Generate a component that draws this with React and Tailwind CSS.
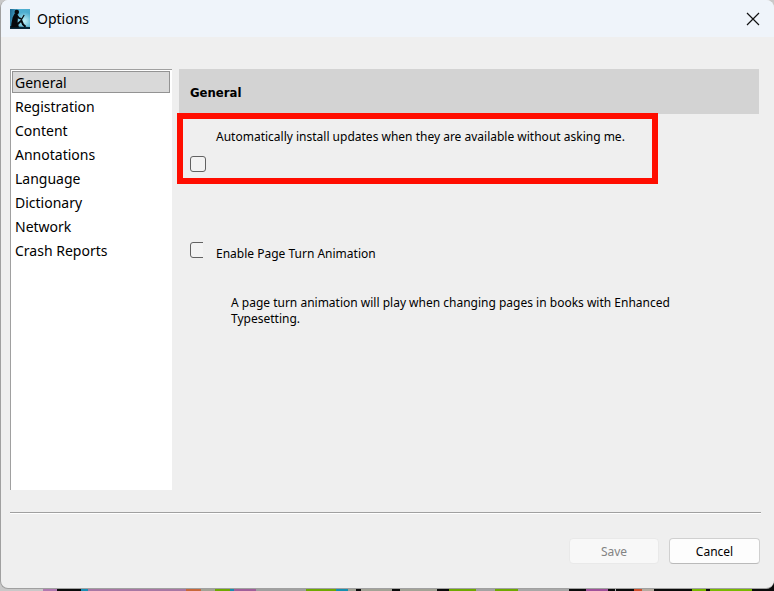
import React, { useState } from 'react';

const SECTIONS = [
    'General',
    'Registration',
    'Content',
    'Annotations',
    'Language',
    'Dictionary',
    'Network',
    'Crash Reports',
];

// Slices of the desktop that show under the window: [x, width, colour]
const DESKTOP = [
    [0, 43, '#c9c9c9'],
    [43, 14, '#b07ab0'],
    [57, 24, '#0a0a0a'],
    [81, 7, '#1c8fb5'],
    [88, 98, '#a878a4'],
    [186, 15, '#c8683a'],
    [201, 14, '#a3a396'],
    [215, 15, '#6fa800'],
    [230, 4, '#1590b0'],
    [234, 22, '#a0609a'],
    [256, 50, '#a0a0a0'],
    [306, 30, '#6fa800'],
    [336, 12, '#1590b0'],
    [348, 8, '#a3a396'],
    [356, 5, '#0a0a0a'],
    [361, 31, '#a3a396'],
    [392, 8, '#0a0a0a'],
    [400, 37, '#a3a396'],
    [437, 12, '#0a0a0a'],
    [449, 27, '#6fa800'],
    [476, 19, '#a3a3a3'],
    [495, 23, '#6fa800'],
    [518, 51, '#a8a8a8'],
    [569, 17, '#0a0a0a'],
    [586, 22, '#a0529a'],
    [608, 7, '#0a0a0a'],
    [615, 1, '#b0b0b0'],
    [616, 18, '#0a0a0a'],
    [634, 8, '#d0502c'],
    [642, 12, '#b5aca0'],
    [654, 38, '#0a0a0a'],
    [692, 14, '#7ab800'],
    [706, 4, '#0a0a0a'],
    [710, 42, '#7ab800'],
    [752, 22, '#0a0a0a'],
];

const Desktop = () => (
    <svg
        className="absolute bottom-0 left-0 w-full h-2"
        viewBox="0 0 774 8"
        preserveAspectRatio="none"
        shapeRendering="crispEdges"
        aria-hidden="true"
    >
        {DESKTOP.map(([x, width, fill]) => (
            <rect key={x} x={x} y="0" width={width} height="8" fill={fill} />
        ))}
    </svg>
);

const AppIcon = () => (
    <svg className="w-5 h-5" viewBox="0 0 20 20" aria-hidden="true">
        <defs>
            <linearGradient id="sky" x1="0" y1="0" x2="1" y2="0.2">
                <stop offset="0" stopColor="#1b668f" />
                <stop offset="0.45" stopColor="#4fb0d2" />
                <stop offset="1" stopColor="#4aabcd" />
            </linearGradient>
            <radialGradient id="glow" cx="0.72" cy="0.6" r="0.45">
                <stop offset="0" stopColor="#c0f0f6" />
                <stop offset="1" stopColor="#c0f0f6" stopOpacity="0" />
            </radialGradient>
        </defs>
        <rect width="20" height="20" fill="url(#sky)" />
        <rect width="20" height="20" fill="url(#glow)" />
        <path d="M0 17 L5 17.5 L20 18 V20 H0 Z" fill="#082838" />
        <circle cx="6.8" cy="3" r="2.3" fill="#05090d" />
        {/* back and seat */}
        <path d="M4.6 4.6 L7.6 5 L8 8 L7.6 13 L9 18.4 H1 L1.4 14.5 L2.6 8.5 Z" fill="#05090d" />
        {/* arm, book and raised knee */}
        <path d="M7 6.4 L9 9 L11.6 10" fill="none" stroke="#05090d" strokeWidth="1.6" />
        <path d="M11.4 10.6 L14.2 6" fill="none" stroke="#05090d" strokeWidth="1.2" />
        <path d="M6 16.6 L11.4 11.6 L13 15.4 L15.6 17.8" fill="none" stroke="#05090d" strokeWidth="2" />
    </svg>
);

const CloseIcon = () => (
    <svg className="w-[14px] h-[14px]" viewBox="0 0 14 14" fill="none" aria-hidden="true">
        <path d="M1 1 L13 13 M13 1 L1 13" stroke="#111111" strokeWidth="1.2" />
    </svg>
);

const CheckBox = ({ id, checked, onChange }) => (
    <input
        id={id}
        type="checkbox"
        checked={checked}
        onChange={(e) => onChange(e.target.checked)}
        className="block appearance-none shrink-0 w-4 h-4 rounded-[3px] border border-[#626262] bg-[#f3f3f3] checked:bg-[#0067c0]"
    />
);

const App = () => {
    const [active, setActive] = useState('General');
    const [autoUpdate, setAutoUpdate] = useState(false);
    const [pageTurn, setPageTurn] = useState(false);

    return (
        <div className="relative min-h-screen flex flex-col bg-[#c9c9c9] pb-0.5 text-black">
            <Desktop />

            <div className="relative flex-1 flex flex-col rounded-lg overflow-hidden border-l border-b border-[#a0a0a0] bg-[#efefef]">
                {/* Title bar */}
                <header className="flex items-center gap-[7px] h-[37px] pl-[9px] pr-[14px] bg-[#eff4fa]">
                    <AppIcon />
                    <h1 className="flex-1 font-['Noto_Sans','Open_Sans',sans-serif] text-sm">Options</h1>
                    <button type="button" aria-label="Close">
                        <CloseIcon />
                    </button>
                </header>

                {/* Section list and settings */}
                <div className="flex-1 flex items-stretch pt-8 pl-[9px] pr-[15px]">
                    <nav className="w-[162px] shrink-0 border-t border-l border-[#a0a0a0] bg-white p-px pr-0.5 font-['Noto_Sans','Open_Sans',sans-serif] text-sm">
                        {SECTIONS.map((name) => (
                            <button
                                key={name}
                                type="button"
                                onClick={() => setActive(name)}
                                className={
                                    name === active
                                        ? 'block w-full h-[22px] mb-0.5 px-0.5 text-left leading-[22px] border border-[#939393] bg-[#d9d9d9]'
                                        : 'block w-full h-[22px] mb-0.5 px-0.5 text-left leading-[22px] border border-transparent'
                                }
                            >
                                {name}
                            </button>
                        ))}
                    </nav>

                    <main className="flex-1 ml-[7px] font-['Noto_Sans','Open_Sans',sans-serif] text-xs leading-4">
                        <h2 className="flex items-center h-[45px] px-[11px] pt-0.5 bg-[#d3d3d3] font-['DejaVu_Sans_Condensed','DejaVu_Sans',sans-serif] text-[13px] font-bold">
                            {active}
                        </h2>

                        <div className="relative w-[83%] h-[71px] -mt-px -ml-0.5 border-6 border-[#ff0d00] bg-[#efefef] pt-2.5 pl-[7px]">
                            <label htmlFor="auto-update" className="block pl-[26px] mb-[11px] whitespace-nowrap">
                                Automatically install updates when they are available without asking me.
                            </label>
                            <CheckBox id="auto-update" checked={autoUpdate} onChange={setAutoUpdate} />
                        </div>

                        <div className="flex items-start mt-[58px] pl-[11px]">
                            <div className="w-[13px] overflow-hidden">
                                <CheckBox id="page-turn" checked={pageTurn} onChange={setPageTurn} />
                            </div>
                            <label htmlFor="page-turn" className="pl-[13px] pt-1">
                                Enable Page Turn Animation
                            </label>
                        </div>
                        <p className="mt-[33px] pl-[52px] pr-20">
                            A page turn animation will play when changing pages in books with Enhanced Typesetting.
                        </p>
                    </main>
                </div>

                {/* Buttons */}
                <footer className="mt-[22px] ml-[9px] mr-[13px] border-t border-[#a0a0a0] font-['Noto_Sans','Open_Sans',sans-serif] text-xs">
                    <div className="flex justify-end gap-2.5 border-t border-white pt-6 pb-6 pr-px">
                        <button
                            type="button"
                            disabled
                            className="w-[90px] h-[26px] pt-0.5 rounded border border-[#e9e9e9] bg-[#f8f8f8] text-[#838383]"
                        >
                            Save
                        </button>
                        <button
                            type="button"
                            className="w-[91px] h-[26px] pt-0.5 rounded border border-[#d0d0d0] border-b-[#bababa] bg-[#fdfdfd]"
                        >
                            Cancel
                        </button>
                    </div>
                </footer>
            </div>
        </div>
    );
};

export default App;
